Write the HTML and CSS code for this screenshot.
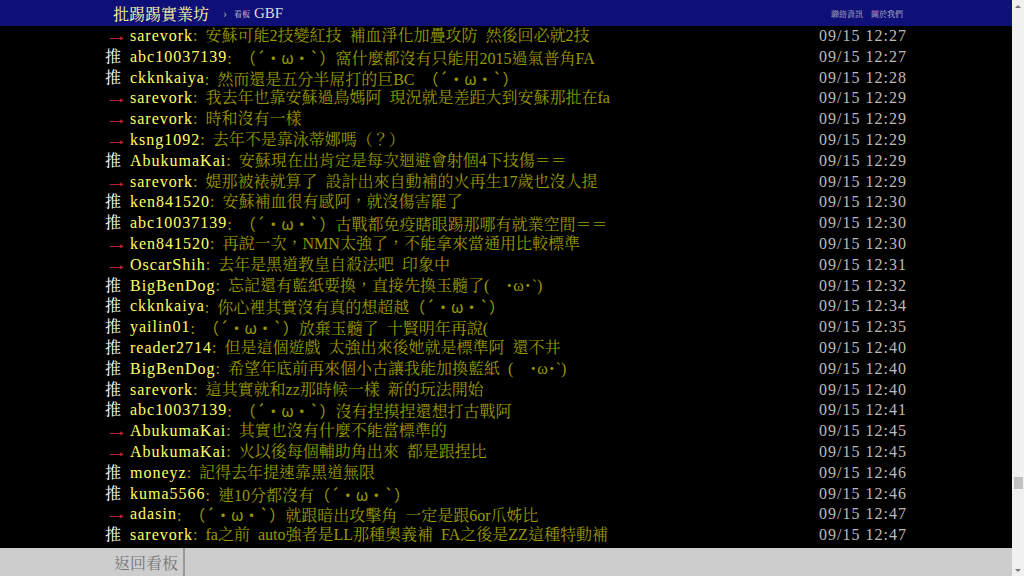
FILE: index.html
```html
<!DOCTYPE html>
<html lang="zh-Hant">
<head>
    <meta charset="UTF-8">
    <meta name="viewport" content="width=device-width, initial-scale=1.0">
    <title>GBF - 批踢踢實業坊</title>
    <link rel="stylesheet" href="styles.css">
</head>
<body>
    <div class="page">
        <div class="main">
            <div class="topbar">
                <div class="bbs-content topbar-inner">
                    <a href="#" class="logo">批踢踢實業坊</a>
                    <span class="crumb">›</span>
                    <a href="#" class="board"><span class="board-label">看板</span>GBF</a>
                    <div class="links">
                        <a href="#">聯絡資訊</a>
                        <a href="#">關於我們</a>
                    </div>
                </div>
            </div>

            <div class="comments bbs-content">
                <div class="push"><span class="push-tag arrow">→</span><span class="push-userid">sarevork</span><span class="push-content">: 安蘇可能2技變紅技 補血淨化加疊攻防 然後回必就2技</span><span class="push-ipdatetime">09/15 12:27</span></div>
                <div class="push"><span class="push-tag">推</span><span class="push-userid">abc10037139</span><span class="push-content">: <span class="kao">（´・ω・`）</span>窩什麼都沒有只能用2015過氣普角FA</span><span class="push-ipdatetime">09/15 12:27</span></div>
                <div class="push"><span class="push-tag">推</span><span class="push-userid">ckknkaiya</span><span class="push-content">: 然而還是五分半屌打的巨BC <span class="kao">（´・ω・`）</span></span><span class="push-ipdatetime">09/15 12:28</span></div>
                <div class="push"><span class="push-tag arrow">→</span><span class="push-userid">sarevork</span><span class="push-content">: 我去年也靠安蘇過鳥媽阿 現況就是差距大到安蘇那批在fa</span><span class="push-ipdatetime">09/15 12:29</span></div>
                <div class="push"><span class="push-tag arrow">→</span><span class="push-userid">sarevork</span><span class="push-content">: 時和沒有一樣</span><span class="push-ipdatetime">09/15 12:29</span></div>
                <div class="push"><span class="push-tag arrow">→</span><span class="push-userid">ksng1092</span><span class="push-content">: 去年不是靠泳蒂娜嗎（？）</span><span class="push-ipdatetime">09/15 12:29</span></div>
                <div class="push"><span class="push-tag">推</span><span class="push-userid">AbukumaKai</span><span class="push-content">: 安蘇現在出肯定是每次迴避會射個4下技傷＝＝</span><span class="push-ipdatetime">09/15 12:29</span></div>
                <div class="push"><span class="push-tag arrow">→</span><span class="push-userid">sarevork</span><span class="push-content">: 媞那被裱就算了 設計出來自動補的火再生17歲也沒人提</span><span class="push-ipdatetime">09/15 12:29</span></div>
                <div class="push"><span class="push-tag">推</span><span class="push-userid">ken841520</span><span class="push-content">: 安蘇補血很有感阿，就沒傷害罷了</span><span class="push-ipdatetime">09/15 12:30</span></div>
                <div class="push"><span class="push-tag">推</span><span class="push-userid">abc10037139</span><span class="push-content">: <span class="kao">（´・ω・`）</span>古戰都免疫瞎眼踢那哪有就業空間＝＝</span><span class="push-ipdatetime">09/15 12:30</span></div>
                <div class="push"><span class="push-tag arrow">→</span><span class="push-userid">ken841520</span><span class="push-content">: 再說一次，NMN太強了，不能拿來當通用比較標準</span><span class="push-ipdatetime">09/15 12:30</span></div>
                <div class="push"><span class="push-tag arrow">→</span><span class="push-userid">OscarShih</span><span class="push-content">: 去年是黑道教皇自殺法吧 印象中</span><span class="push-ipdatetime">09/15 12:31</span></div>
                <div class="push"><span class="push-tag">推</span><span class="push-userid">BigBenDog</span><span class="push-content">: 忘記還有藍紙要換，直接先換玉髓了(　･ω･`)</span><span class="push-ipdatetime">09/15 12:32</span></div>
                <div class="push"><span class="push-tag">推</span><span class="push-userid">ckknkaiya</span><span class="push-content">: 你心裡其實沒有真的想超越<span class="kao">（´・ω・`）</span></span><span class="push-ipdatetime">09/15 12:34</span></div>
                <div class="push"><span class="push-tag">推</span><span class="push-userid">yailin01</span><span class="push-content">: <span class="kao">（´・ω・`）</span>放棄玉髓了 十賢明年再說(</span><span class="push-ipdatetime">09/15 12:35</span></div>
                <div class="push"><span class="push-tag">推</span><span class="push-userid">reader2714</span><span class="push-content">: 但是這個遊戲 太強出來後她就是標準阿 還不井</span><span class="push-ipdatetime">09/15 12:40</span></div>
                <div class="push"><span class="push-tag">推</span><span class="push-userid">BigBenDog</span><span class="push-content">: 希望年底前再來個小古讓我能加換藍紙 (　･ω･`)</span><span class="push-ipdatetime">09/15 12:40</span></div>
                <div class="push"><span class="push-tag">推</span><span class="push-userid">sarevork</span><span class="push-content">: 這其實就和zz那時候一樣 新的玩法開始</span><span class="push-ipdatetime">09/15 12:40</span></div>
                <div class="push"><span class="push-tag">推</span><span class="push-userid">abc10037139</span><span class="push-content">: <span class="kao">（´・ω・`）</span>沒有捏摸捏還想打古戰阿</span><span class="push-ipdatetime">09/15 12:41</span></div>
                <div class="push"><span class="push-tag arrow">→</span><span class="push-userid">AbukumaKai</span><span class="push-content">: 其實也沒有什麼不能當標準的</span><span class="push-ipdatetime">09/15 12:45</span></div>
                <div class="push"><span class="push-tag arrow">→</span><span class="push-userid">AbukumaKai</span><span class="push-content">: 火以後每個輔助角出來 都是跟捏比</span><span class="push-ipdatetime">09/15 12:45</span></div>
                <div class="push"><span class="push-tag">推</span><span class="push-userid">moneyz</span><span class="push-content">: 記得去年提速靠黑道無限</span><span class="push-ipdatetime">09/15 12:46</span></div>
                <div class="push"><span class="push-tag">推</span><span class="push-userid">kuma5566</span><span class="push-content">: 連10分都沒有<span class="kao">（´・ω・`）</span></span><span class="push-ipdatetime">09/15 12:46</span></div>
                <div class="push"><span class="push-tag arrow">→</span><span class="push-userid">adasin</span><span class="push-content">: <span class="kao">（´・ω・`）</span>就跟暗出攻擊角 一定是跟6or爪姊比</span><span class="push-ipdatetime">09/15 12:47</span></div>
                <div class="push"><span class="push-tag">推</span><span class="push-userid">sarevork</span><span class="push-content">: fa之前 auto強者是LL那種奧義補 FA之後是ZZ這種特動補</span><span class="push-ipdatetime">09/15 12:47</span></div>
            </div>

            <div class="footer">
                <div class="bbs-content footer-inner">
                    <a href="#" class="back">返回看板</a>
                </div>
            </div>
        </div>

        <!-- fake scrollbar, page is scrolled near the end -->
        <div class="scrollbar">
            <span class="sb-arrow up"></span>
            <span class="sb-track"><span class="sb-thumb"></span></span>
            <span class="sb-arrow down"></span>
        </div>
    </div>
</body>
</html>
```

FILE: styles.css
```css
* {
    box-sizing: border-box;
}

html, body {
    margin: 0;
    padding: 0;
    height: 100%;
}

body {
    background-color: #000;
    font-family: "Liberation Serif", "Noto Serif CJK TC", "Noto Sans CJK TC", serif;
    overflow: hidden;
}

.page {
    display: flex;
    height: 576px;
}

.main {
    flex: 1;
    min-width: 0;
    display: flex;
    flex-direction: column;
}

.bbs-content {
    width: 802px;
    margin: 0 auto;
}

/* top bar */
.topbar {
    flex: none;
    height: 26px;
    background-color: #0f0f78;
}

.topbar-inner {
    display: flex;
    align-items: center;
    height: 100%;
    padding: 0 4px 0 8px;
}

.logo {
    color: #ffffa0;
    font-size: 16px;
    text-decoration: none;
}

.crumb {
    color: #aaa;
    font-size: 12px;
    margin: 0 7px 0 14px;
}

.board {
    display: flex;
    align-items: center;
    color: #ddd;
    font-size: 15px;
    text-decoration: none;
}

.board-label {
    font-size: 8px;
    margin-right: 4px;
}

.links {
    margin-left: auto;
    display: flex;
    gap: 8px;
}

.links a {
    color: #bbc;
    font-size: 8px;
    text-decoration: none;
}

/* comments */
.comments {
    flex: 1;
    overflow: hidden;
    font-size: 16px;
    line-height: 20.8px;
    word-spacing: 4px;
}

.push {
    display: flex;
    height: 20.8px;
    white-space: pre;
}

.push-tag {
    flex: none;
    width: 25px;
    color: #fff;
}

/* the serif arrow is short, stretch it to a full cell */
.push-tag.arrow {
    color: #d02a3a;
    transform: scaleX(1.45);
    transform-origin: 0 50%;
    width: 17.25px;
    margin-right: 7.75px;
}

.push-userid {
    color: #ff6;
    letter-spacing: 1px;
}

.push-content {
    flex: 1;
    min-width: 0;
    color: #990;
}

.kao {
    font-family: "Noto Sans CJK TC", sans-serif;
}

.push-ipdatetime {
    color: #bbb;
    letter-spacing: 1px;
    word-spacing: 0;
}

/* footer */
.footer {
    flex: none;
    height: 28px;
    background-color: #cdcdcd;
}

.footer-inner {
    display: flex;
    height: 100%;
}

.back {
    display: flex;
    align-items: center;
    padding: 0 5px 0 9px;
    border-right: 2px solid #999;
    color: #777;
    font-size: 16px;
    text-decoration: none;
}

/* scrollbar */
.scrollbar {
    flex: none;
    width: 12px;
    background-color: #f1f1f1;
    display: flex;
    flex-direction: column;
}

.sb-arrow {
    flex: none;
    height: 12px;
    display: flex;
    align-items: center;
    justify-content: center;
}

.sb-arrow::before {
    content: "";
    border-left: 3px solid transparent;
    border-right: 3px solid transparent;
}

.sb-arrow.up::before {
    border-bottom: 3px solid #777;
}

.sb-arrow.down::before {
    border-top: 3px solid #777;
}

.sb-track {
    flex: 1;
}

.sb-thumb {
    display: block;
    width: 9px;
    height: 12px;
    margin: 465px auto 0;
    background-color: #c1c1c1;
}
```
